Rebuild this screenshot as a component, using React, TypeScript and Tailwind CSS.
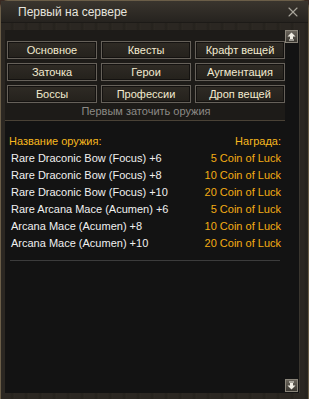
import { X } from "lucide-react";

const tabs = [
  "Основное",
  "Квесты",
  "Крафт вещей",
  "Заточка",
  "Герои",
  "Аугментация",
  "Боссы",
  "Профессии",
  "Дроп вещей",
];

const rows = [
  { name: "Rare Draconic Bow (Focus) +6", reward: "5 Coin of Luck" },
  { name: "Rare Draconic Bow (Focus) +8", reward: "10 Coin of Luck" },
  { name: "Rare Draconic Bow (Focus) +10", reward: "20 Coin of Luck" },
  { name: "Rare Arcana Mace (Acumen) +6", reward: "5 Coin of Luck" },
  { name: "Arcana Mace (Acumen) +8", reward: "10 Coin of Luck" },
  { name: "Arcana Mace (Acumen) +10", reward: "20 Coin of Luck" },
];

const ScrollButton = ({ down }: { down?: boolean }) => (
  <div className="w-[13px] h-[13px] border border-[#8a857a] bg-gradient-to-b from-[#6a655c] to-[#3a3731] flex items-center justify-center">
    <svg width="9" height="9" viewBox="0 0 9 9" className={down ? "rotate-180" : ""}>
      <path d="M4.5 0.5 L8.5 4.5 L6 4.5 L6 7 L3 7 L3 4.5 L0.5 4.5 Z" fill="#f2efe6" />
      <rect x="2" y="7.5" width="5" height="1" fill="#f2efe6" />
    </svg>
  </div>
);

export default function App() {
  return (
    <div
      className="w-[309px] h-[399px] bg-[#3a2a22] overflow-hidden"
      style={{ fontFamily: '"Liberation Sans", Arial, sans-serif' }}
    >
      <div className="h-full flex flex-col rounded-t-[8px] border-t border-x border-[#6b5e48] bg-[#2a2621]">
        {/* Title */}
        <div className="h-[22px] flex items-center justify-between pl-[17px] pr-[7px] bg-gradient-to-b from-[#3a352e] to-[#26231f] border-b border-[#1c1a17]">
          <span className="text-[12px] text-[#e6e4de] leading-none">Первый на сервере</span>
          <X size={16} strokeWidth={1.6} className="text-[#aaa69c]" />
        </div>

        {/* Body */}
        <div className="flex-1 flex pl-[4px] pr-[8px] pt-[7px] pb-[6px] bg-[repeating-linear-gradient(90deg,#2b2722_0px,#2b2722_9px,#25221d_11px,#2e2a24_14px)]">
          <div className="flex-1 flex bg-[#131313] border-r border-[#3a362f]">
            <div className="flex-1 flex flex-col">
              {/* Tabs */}
              <div className="bg-[#1d1b18] pt-[11px] pl-[2px] pb-[1px] border-b border-[#4a4236]">
                <div className="grid grid-cols-3 gap-x-[4px] gap-y-[4px] w-[278px]">
                  {tabs.map((t) => (
                    <div
                      key={t}
                      className="h-[18px] border border-[#66615a] bg-gradient-to-b from-[#2f2b25] to-[#24211c] shadow-[inset_0_0_0_1px_#141210] flex items-center justify-center text-[11px] text-[#f3ebd0]"
                    >
                      {t}
                    </div>
                  ))}
                </div>
                <div className="text-center text-[11px] text-[#8c8a86] h-[16px] leading-[16px] w-[278px]">
                  Первым заточить оружия
                </div>
              </div>

              {/* List */}
              <div className="flex-1 pt-[12px] pl-[4px] pr-[4px]">
                <div className="flex justify-between text-[11px] text-[#f7b81e] h-[17px] items-center">
                  <span>Название оружия:</span>
                  <span>Награда:</span>
                </div>
                {rows.map((r) => (
                  <div key={r.name} className="flex justify-between h-[17px] items-center text-[11px]">
                    <span className="text-[#f0f0f0] pl-[2px]">{r.name}</span>
                    <span className="text-[#f3ad14]">{r.reward}</span>
                  </div>
                ))}
                <div className="mt-[8px] ml-[1px] w-[270px] h-px bg-[#3c3c3c]" />
              </div>
            </div>
            {/* Scrollbar */}
            <div className="w-[14px] flex flex-col justify-between items-start pb-[1px]">
              <ScrollButton />
              <ScrollButton down />
            </div>
          </div>
        </div>
      </div>
    </div>
  );
}
